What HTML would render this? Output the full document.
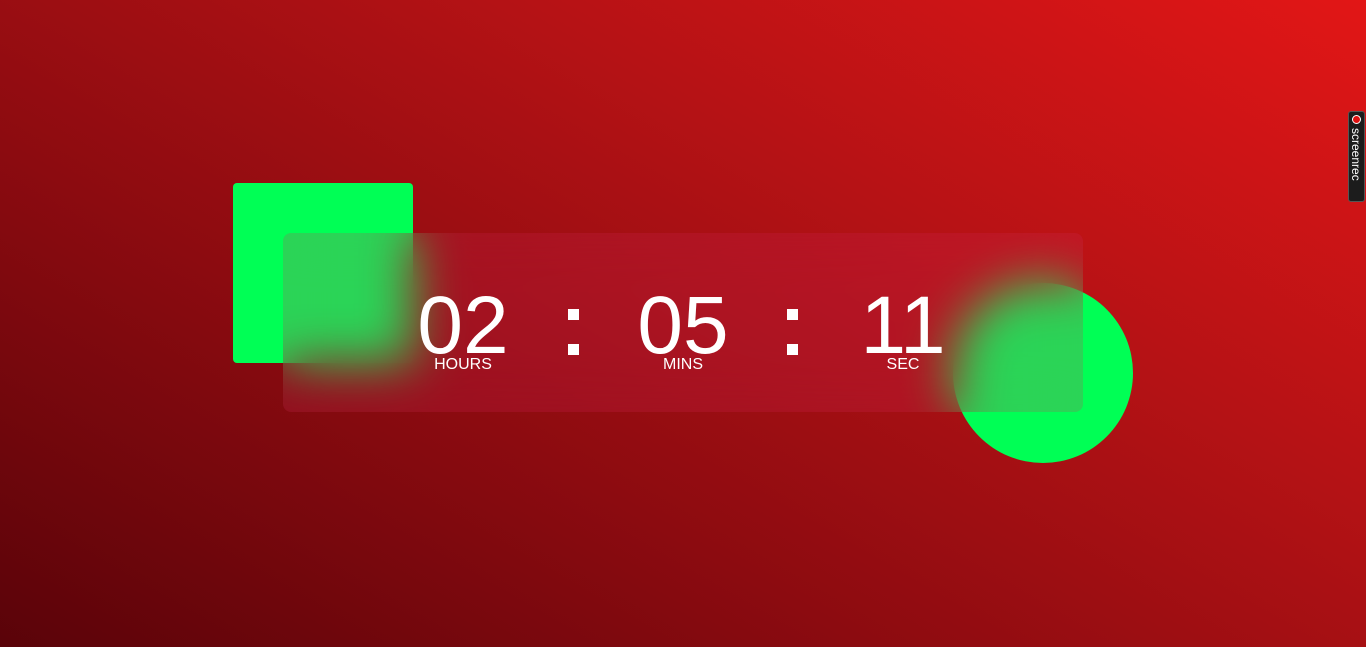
<!DOCTYPE html>
<html><head><style>
html,body{margin:0;padding:0;width:1366px;height:647px;overflow:hidden;}
body{background:linear-gradient(30deg,#5a0309 0%,#8c0b10 35%,#b41215 65%,#e21616 100%);font-family:"Liberation Sans",Arial,sans-serif;position:relative;}
.sq{position:absolute;left:233px;top:183px;width:180px;height:180px;background:#00ff55;border-radius:4px;}
.ci{position:absolute;left:953px;top:283px;width:180px;height:180px;background:#00ff55;border-radius:50%;}
.card{position:absolute;left:283px;top:233px;width:800px;height:179px;border-radius:8px;background:rgba(215,40,95,0.2);backdrop-filter:blur(25px);-webkit-backdrop-filter:blur(25px);overflow:hidden;}
.n{position:absolute;color:#fff;font-size:82px;line-height:1;top:285px;width:140px;text-align:center;}
.d{position:absolute;width:11px;height:11px;background:#fff;}
.l{position:absolute;color:#fff;font-size:16px;top:356px;width:140px;text-align:center;}
.rec{position:absolute;left:1348px;top:111px;width:17px;height:91px;background:#1c1c1c;border-radius:3px;border:1px solid #555;box-sizing:border-box;}
.rec .dot{position:absolute;left:3px;top:3px;width:9px;height:9px;border-radius:50%;background:#e01010;border:1px solid #fff;box-sizing:border-box;}
.rec .t{position:absolute;left:14px;top:16px;transform:rotate(90deg);transform-origin:0 0;color:#fff;font-size:12px;white-space:nowrap;}
</style></head><body>
<div class="sq"></div><div class="ci"></div>
<div class="card"></div>
<div class="n" style="left:393px">02</div>
<div class="d" style="left:568px;top:309px"></div><div class="d" style="left:568px;top:344px"></div>
<div class="n" style="left:613px">05</div>
<div class="d" style="left:787px;top:309px"></div><div class="d" style="left:787px;top:344px"></div>
<div class="n" style="left:833px">11</div>
<div class="l" style="left:393px">HOURS</div>
<div class="l" style="left:613px">MINS</div>
<div class="l" style="left:833px">SEC</div>
<div class="rec"><div class="dot"></div><div class="t">screenrec</div></div>
</body></html>
